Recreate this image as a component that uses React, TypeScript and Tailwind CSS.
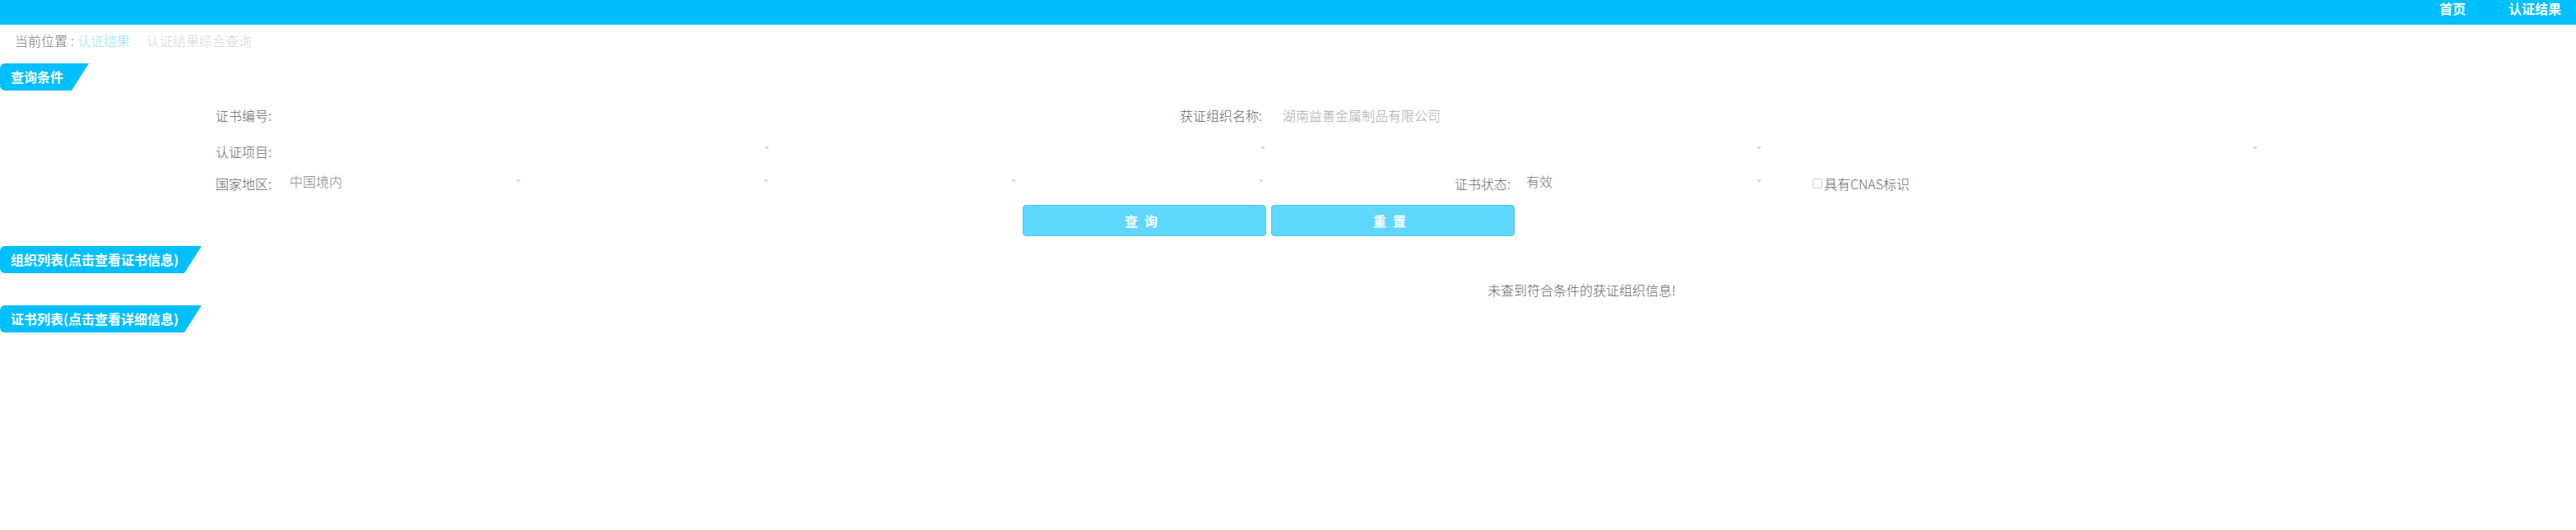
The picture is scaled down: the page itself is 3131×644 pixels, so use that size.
import React from 'react';

const FONT = { fontFamily: '"Noto Sans CJK SC", "Noto Sans", sans-serif' };

const Arrow = () => (
  <span className="inline-block h-0 w-0 border-l-[3px] border-r-[3px] border-t-[4px] border-l-transparent border-r-transparent border-t-[#d9d9d9]" />
);

const Select = ({ width, value, valueColor }: { width: string; value?: string; valueColor?: string }) => (
  <div className={`flex h-full items-center justify-between pr-[10px] ${width}`}>
    <span className={`pl-[10px] ${valueColor ?? 'text-[#888]'}`}>{value ?? ''}</span>
    <Arrow />
  </div>
);

const SectionTab = ({ title, width }: { title: string; width: string }) => (
  <div
    className={`h-[33px] ${width} rounded-l-[6px] bg-[#00bfff] pl-[13px] text-[16px] font-bold leading-[33px] text-white [clip-path:polygon(0_0,100%_0,calc(100%_-_21px)_100%,0_100%)]`}
  >
    {title}
  </div>
);

export default function App() {
  return (
    <div className="min-h-[644px] w-[3131px] bg-white text-[16px] font-light" style={FONT}>
      {/* top bar */}
      <div className="flex h-[30px] items-start justify-end gap-[52px] bg-[#00bfff] pr-[18px] pt-[1px] text-[16px] font-bold leading-[18px] text-white">
        <span>首页</span>
        <span>认证结果</span>
      </div>

      {/* breadcrumb */}
      <div className="h-[47px] pl-[18px] pt-[10px] leading-[18px]">
        <span className="text-[#777]">当前位置</span>
        <span className="mx-[4px] text-[#999]">:</span>
        <span className="text-[#8fe3ff]">认证结果</span>
        <span className="inline-block w-[20px]" />
        <span className="text-[#d6d6d6]">认证结果综合查询</span>
      </div>

      <SectionTab title="查询条件" width="w-[108px]" />

      {/* query form */}
      <div className="mt-[10px] text-[#666]">
        <div className="flex h-[40px] items-center pl-[262px]">
          <span className="w-[80px]">证书编号:</span>
          <div className="w-[1092px]" />
          <span className="w-[116px]">获证组织名称:</span>
          <span className="pl-[9px] text-[#aaa]">湖南益善金属制品有限公司</span>
        </div>

        <div className="flex h-[40px] items-center pl-[262px]">
          <span className="w-[80px] pt-[8px]">认证项目:</span>
          <Select width="w-[603px]" />
          <Select width="w-[603px]" />
          <Select width="w-[603px]" />
          <Select width="w-[603px]" />
        </div>

        <div className="flex h-[40px] items-center pl-[262px]">
          <span className="w-[80px] pt-[6px]">国家地区:</span>
          <Select width="w-[301px]" value="中国境内" />
          <Select width="w-[301px]" />
          <Select width="w-[301px]" />
          <Select width="w-[301px]" />
          <span className="ml-[222px] w-[80px] pt-[6px]">证书状态:</span>
          <div className="flex h-full w-[303px] items-center justify-between pr-[10px]">
            <span className="pl-[7px] text-[#777]">有效</span>
            <Arrow />
          </div>
          <label className="ml-[52px] flex items-center pt-[6px]">
            <span className="h-[12px] w-[12px] rounded-[2px] border border-[#cfcfcf] bg-white" />
            <span className="ml-[2px]">具有CNAS标识</span>
          </label>
        </div>

        <div className="mt-[9px] flex gap-[6px] pl-[1243px]">
          <button className="h-[38px] w-[296px] rounded-[4px] border border-[#4dc6f7] bg-[#5fd7ff] text-[16px] font-bold tracking-[8px] text-white">
            查询
          </button>
          <button className="h-[38px] w-[296px] rounded-[4px] border border-[#4dc6f7] bg-[#5fd7ff] text-[16px] font-bold tracking-[8px] text-white">
            重置
          </button>
        </div>
      </div>

      <div className="mt-[12px]">
        <SectionTab title="组织列表(点击查看证书信息)" width="w-[245px]" />
      </div>

      <div className="flex h-[39px] items-center pl-[1808px] text-[#666]">未查到符合条件的获证组织信息!</div>

      <SectionTab title="证书列表(点击查看详细信息)" width="w-[245px]" />
    </div>
  );
}
